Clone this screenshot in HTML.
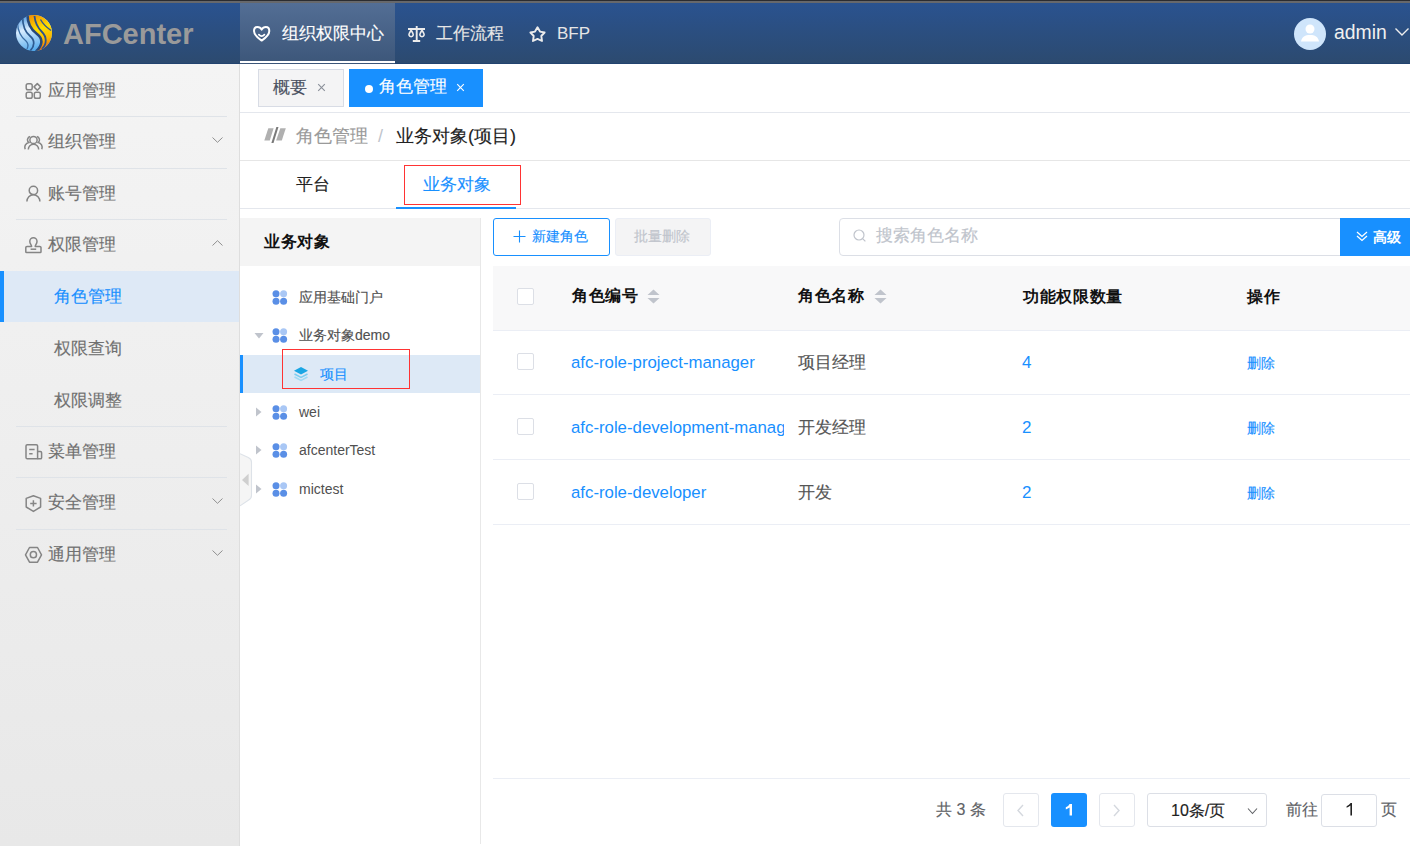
<!DOCTYPE html>
<html><head><meta charset="utf-8">
<style>
*{box-sizing:border-box;margin:0;padding:0}
html,body{width:1410px;height:846px;overflow:hidden;background:#fff;font-family:"Liberation Sans",sans-serif;}
.a{position:absolute;white-space:nowrap}
#hdr{position:absolute;left:0;top:0;width:1410px;height:64px;background:linear-gradient(#2a5391,#2c4a6f);}
#hdr .top1{position:absolute;left:0;top:0;width:1410px;height:1px;background:#2b2c30}
#hdr .top2{position:absolute;left:0;top:1px;width:1410px;height:2px;background:#67686b}
#side{position:absolute;left:0;top:64px;width:240px;height:782px;background:linear-gradient(#f4f4f4,#e8e8e8);border-right:1px solid #dedede}
.mi{position:absolute;left:0;width:239px;height:52px;color:#777;font-size:17px}
.div{position:absolute;left:16px;width:211px;height:1px;background:#dfe3e8}
.ico{position:absolute}
.chev{position:absolute;left:212px;width:11px;height:6px}
</style></head><body>

<div id="hdr">
  <div class="top1"></div><div class="top2"></div><div style="position:absolute;left:0;top:63px;width:1410px;height:1px;background:#22436f"></div>
  <!-- logo -->
  <svg class="a" style="left:15px;top:14px" width="38" height="38" viewBox="0 0 38 38">
    <defs>
      <clipPath id="gc"><circle cx="19" cy="19" r="18"/></clipPath>
      <linearGradient id="gb" x1="0.2" y1="0" x2="0.5" y2="1"><stop offset="0" stop-color="#3d8fdc"/><stop offset="0.4" stop-color="#d8ecff"/><stop offset="0.65" stop-color="#9fd0f6"/><stop offset="1" stop-color="#4aa6ec"/></linearGradient>
      <linearGradient id="gy" x1="0.3" y1="0" x2="0.6" y2="1"><stop offset="0" stop-color="#f39200"/><stop offset="0.4" stop-color="#ffdf00"/><stop offset="0.7" stop-color="#fbb800"/><stop offset="1" stop-color="#e24f10"/></linearGradient>
    </defs>
    <g clip-path="url(#gc)">
      <rect x="0" y="0" width="38" height="38" fill="url(#gb)"/>
      <path d="M12.5 0 C12.5 9, 15 15, 22 20 C28 24.5, 28 31, 21 38 L40 38 L40 0 Z" fill="url(#gy)"/>
      <path d="M12.5 1 C12.5 9, 15 15, 22 20 C28 24.5, 28 31, 21 37.5" stroke="#28497a" stroke-width="2.6" fill="none"/>
      <path d="M7.6 2.5 C7.6 10, 10 18, 15 22 C20 26, 20 32, 15 37" stroke="#2d5a90" stroke-width="1.7" fill="none"/>
      <path d="M2.5 9 C2.8 17, 6 23, 11 27 C13 29, 13.5 32, 12 35" stroke="#3a6ea6" stroke-width="1.3" fill="none"/>
      <path d="M19.5 2 C20 8, 22 13, 27 18 C32 23, 32 30, 27 35" stroke="#2c528a" stroke-width="1.8" fill="none"/>
      <path d="M25.5 5.5 C28 10, 31 13, 36 16.5" stroke="#34598c" stroke-width="1.4" fill="none"/>
    </g>
  </svg>
  <div class="a" style="left:63px;top:17px;font-size:29px;font-weight:bold;color:#9a9a9a;line-height:34px">AFCenter</div>

  <!-- nav active -->
  <div class="a" style="left:240px;top:3px;width:155px;height:61px;background:linear-gradient(#536e95,#3c5679)"></div>
  <div class="a" style="left:240px;top:61px;width:155px;height:2px;background:#fff"></div>
  <svg class="a" style="left:252px;top:25px" width="19" height="18" viewBox="0 0 19 18">
    <path d="M9.65 4.6 C8.7 2.8 7 2 5.4 2 C3.3 2 2 3.8 2 6 C2 9.2 5.2 12.6 9.65 15.6 C14.1 12.6 17.3 9.2 17.3 6 C17.3 3.8 16 2 13.9 2 C12.3 2 10.6 2.8 9.65 4.6 Z" fill="none" stroke="#fff" stroke-width="2" stroke-linejoin="round"/>
    <path d="M6.9 9.7 Q9.65 12.6 12.4 9.7" fill="none" stroke="#fff" stroke-width="1.8" stroke-linecap="round"/>
  </svg>
  <div class="a" style="left:282px;top:24px;font-size:17px;color:#fff;line-height:20px;-webkit-text-stroke:0.15px currentColor">组织权限中心</div>

  <svg class="a" style="left:404px;top:22px" width="26" height="24" viewBox="0 0 26 24">
    <path d="M4 7 H21 M12.7 4.1 V19.3 M8.8 19 H16.2" stroke="#ececec" stroke-width="1.9" fill="none"/>
    <path d="M7.1 8.2 C6.1 10 4.9 11.5 4.9 12.9 A2.25 2.25 0 0 0 9.3 12.9 C9.3 11.5 8.1 10 7.1 8.2 Z M18 8.2 C17 10 15.8 11.5 15.8 12.9 A2.25 2.25 0 0 0 20.2 12.9 C20.2 11.5 19 10 18 8.2 Z" stroke="#ececec" stroke-width="1.6" fill="none" stroke-linejoin="round"/>
  </svg>
  <div class="a" style="left:436px;top:24px;font-size:17px;color:#e6e6e6;line-height:20px;-webkit-text-stroke:0.15px currentColor">工作流程</div>

  <svg class="a" style="left:524px;top:22px" width="26" height="24" viewBox="0 0 26 24">
    <path d="M13.5 5.3 L16 9.6 L20.6 10.5 L17.3 14 L18 19 L13.5 16.9 L9 19 L9.7 14 L6.4 10.5 L11 9.6 Z" fill="none" stroke="#ececec" stroke-width="1.9" stroke-linejoin="round"/>
  </svg>
  <div class="a" style="left:557px;top:24px;font-size:17px;color:#e6e6e6;line-height:20px">BFP</div>

  <!-- user -->
  <svg class="a" style="left:1294px;top:18px" width="32" height="32" viewBox="0 0 32 32">
    <circle cx="16" cy="16" r="16" fill="#cfe5fb"/>
    <circle cx="16" cy="11" r="4.5" fill="#fff"/>
    <path d="M7 23.5 C8 18.5 11 17 16 17 C21 17 24 18.5 25 23.5 Z" fill="#fff"/>
  </svg>
  <div class="a" style="left:1334px;top:21px;font-size:19.4px;color:#f0f0f0;line-height:23px">admin</div>
  <svg class="a" style="left:1394px;top:27px" width="16" height="10" viewBox="0 0 16 10"><path d="M1.5 1.5 L8 8 L14.5 1.5" stroke="#eee" stroke-width="1.4" fill="none"/></svg>
</div>

<div id="side">
</div>
<div class="div" style="top:116px"></div>
<div class="div" style="top:168px"></div>
<div class="div" style="top:219px"></div>
<div class="div" style="top:426px"></div>
<div class="div" style="top:477px"></div>
<div class="div" style="top:529px"></div>
<div class="a" style="left:0;top:271px;width:239px;height:51px;background:#dee9f6"></div>
<div class="a" style="left:0;top:271px;width:4px;height:51px;background:#1890ff"></div>

<svg class="a" style="left:24px;top:82px" width="18" height="18" viewBox="0 0 18 18" fill="none" stroke="#858585" stroke-width="1.5">
  <rect x="2.2" y="1.8" width="6" height="6" rx="1.8"/>
  <rect x="2.2" y="10.3" width="6" height="6" rx="1.8"/>
  <rect x="10.3" y="10.3" width="6" height="6" rx="1.8"/>
  <path d="M13.3 1.6 L16.6 4.9 L13.3 8.2 L10 4.9 Z" stroke-linejoin="round"/>
</svg>
<div class="a" style="left:48px;top:81px;font-size:17px;line-height:20px;color:#707070;-webkit-text-stroke:0.15px currentColor">应用管理</div>

<svg class="a" style="left:24px;top:134px" width="20" height="17" viewBox="0 0 20 17" fill="none" stroke="#858585" stroke-width="1.5">
  <circle cx="9.5" cy="6" r="3.6"/>
  <path d="M4.3 15.6 A5.2 5.4 0 0 1 14.7 15.6"/>
  <path d="M6.2 2.6 A3.4 3.4 0 0 0 4.8 8.6 A4.6 4.8 0 0 0 1.2 15.2"/>
  <path d="M12.8 2.6 A3.4 3.4 0 0 1 14.2 8.6 A4.6 4.8 0 0 1 17.8 15.2"/>
</svg>
<div class="a" style="left:48px;top:132px;font-size:17px;line-height:20px;color:#707070;-webkit-text-stroke:0.15px currentColor">组织管理</div>
<svg class="chev" style="top:137px" viewBox="0 0 11 6"><path d="M0.5 0.5 L5.5 5.3 L10.5 0.5" stroke="#8f8f8f" stroke-width="1" fill="none"/></svg>

<svg class="a" style="left:24px;top:184px" width="18" height="19" viewBox="0 0 18 19" fill="none" stroke="#858585" stroke-width="1.5">
  <circle cx="9.4" cy="6.4" r="4.2"/>
  <path d="M2.9 17.6 A6.5 6.8 0 0 1 15.9 17.6"/>
</svg>
<div class="a" style="left:48px;top:184px;font-size:17px;line-height:20px;color:#707070;-webkit-text-stroke:0.15px currentColor">账号管理</div>

<svg class="a" style="left:24px;top:235px" width="18" height="19" viewBox="0 0 18 19" fill="none" stroke="#858585" stroke-width="1.5">
  <path d="M7.6 11.4 C7.6 10 5.8 9 5.8 6.4 A3.6 3.6 0 0 1 13 6.4 C13 9 11.2 10 11.2 11.4 H15.8 Q17 11.4 17 12.6 V16.8 Q17 17.6 16.2 17.6 H2.6 Q1.8 17.6 1.8 16.8 V12.6 Q1.8 11.4 3 11.4 Z" stroke-linejoin="round"/>
  <path d="M6.6 14.2 H12.2"/>
</svg>
<div class="a" style="left:48px;top:235px;font-size:17px;line-height:20px;color:#707070;-webkit-text-stroke:0.15px currentColor">权限管理</div>
<svg class="chev" style="top:240px" viewBox="0 0 11 6"><path d="M0.5 5.5 L5.5 0.7 L10.5 5.5" stroke="#8f8f8f" stroke-width="1" fill="none"/></svg>

<div class="a" style="left:54px;top:287px;font-size:17px;line-height:20px;color:#1890ff;-webkit-text-stroke:0.15px currentColor">角色管理</div>
<div class="a" style="left:54px;top:339px;font-size:17px;line-height:20px;color:#707070;-webkit-text-stroke:0.15px currentColor">权限查询</div>
<div class="a" style="left:54px;top:391px;font-size:17px;line-height:20px;color:#707070;-webkit-text-stroke:0.15px currentColor">权限调整</div>

<svg class="a" style="left:24px;top:443px" width="19" height="18" viewBox="0 0 19 18" fill="none" stroke="#858585" stroke-width="1.5">
  <path d="M13.6 15.85 H3.3 Q2 15.85 2 14.55 V3.05 Q2 1.75 3.3 1.75 H12.3 Q13.6 1.75 13.6 3.05 Z" stroke-linejoin="round"/>
  <path d="M13.6 8.6 H16.4 Q17.6 8.6 17.6 9.8 V14.65 Q17.6 15.85 16.4 15.85 H13.6"/>
  <path d="M5.2 6.6 H10.6 M5.2 10.8 H8.6"/>
</svg>
<div class="a" style="left:48px;top:442px;font-size:17px;line-height:20px;color:#707070;-webkit-text-stroke:0.15px currentColor">菜单管理</div>

<svg class="a" style="left:24px;top:494px" width="19" height="19" viewBox="0 0 19 19" fill="none" stroke="#858585" stroke-width="1.5">
  <path d="M9.4 1.8 L16.6 4.4 V13 L9.4 17.4 L2.2 13 V4.4 Z" stroke-linejoin="round"/>
  <path d="M9.4 6.2 V12.6 M6.2 9.4 H12.6"/>
</svg>
<div class="a" style="left:48px;top:493px;font-size:17px;line-height:20px;color:#707070;-webkit-text-stroke:0.15px currentColor">安全管理</div>
<svg class="chev" style="top:498px" viewBox="0 0 11 6"><path d="M0.5 0.5 L5.5 5.3 L10.5 0.5" stroke="#8f8f8f" stroke-width="1" fill="none"/></svg>

<svg class="a" style="left:24px;top:546px" width="19" height="18" viewBox="0 0 19 18" fill="none" stroke="#858585" stroke-width="1.5">
  <path d="M5.5 1.5 H13.5 L17.5 8.8 L13.5 16.2 H5.5 L1.5 8.8 Z" stroke-linejoin="round"/>
  <circle cx="9.4" cy="8.7" r="3.1"/>
</svg>
<div class="a" style="left:48px;top:545px;font-size:17px;line-height:20px;color:#707070;-webkit-text-stroke:0.15px currentColor">通用管理</div>
<svg class="chev" style="top:550px" viewBox="0 0 11 6"><path d="M0.5 0.5 L5.5 5.3 L10.5 0.5" stroke="#8f8f8f" stroke-width="1" fill="none"/></svg>


<!-- tabs bar -->
<div class="a" style="left:258px;top:69px;width:86px;height:38px;background:#f4f4f5;border:1px solid #d8dce5"></div>
<div class="a" style="left:273px;top:78px;font-size:17px;line-height:20px;color:#495060;-webkit-text-stroke:0.15px currentColor">概要</div>
<svg class="a" style="left:317px;top:83px" width="9" height="9" viewBox="0 0 9 9"><path d="M1.2 1.2 L7.8 7.8 M7.8 1.2 L1.2 7.8" stroke="#8a8f99" stroke-width="1.1"/></svg>
<div class="a" style="left:349px;top:69px;width:134px;height:38px;background:#1890ff"></div>
<div class="a" style="left:364.5px;top:85px;width:8px;height:8px;border-radius:50%;background:#fff"></div>
<div class="a" style="left:379px;top:77px;font-size:17px;line-height:20px;color:#fff;-webkit-text-stroke:0.15px currentColor">角色管理</div>
<svg class="a" style="left:456px;top:83px" width="9" height="9" viewBox="0 0 9 9"><path d="M1.2 1.2 L7.8 7.8 M7.8 1.2 L1.2 7.8" stroke="#fff" stroke-width="1.1"/></svg>
<div class="a" style="left:240px;top:112px;width:1170px;height:1px;background:#e4e7ed"></div>

<!-- breadcrumb -->
<svg class="a" style="left:260px;top:122px" width="30" height="26" viewBox="0 0 30 26">
  <path d="M8.3 6.2 H13.6 L9.8 18.6 H4.3 Z" fill="#b0b0b0"/><path d="M16.4 4.9 H18.5 L13.5 20.9 H11.4 Z" fill="#7a7a7a"/><path d="M20.3 6.2 H25.8 L21.8 18.6 H16.1 Z" fill="#b0b0b0"/>
</svg>
<div class="a" style="left:296px;top:125px;font-size:18px;line-height:22px;color:#9a9a9a;-webkit-text-stroke:0.15px currentColor">角色管理</div>
<div class="a" style="left:378px;top:125px;font-size:18px;line-height:22px;color:#c0c4cc">/</div>
<div class="a" style="left:396px;top:125px;font-size:18px;line-height:22px;color:#222;-webkit-text-stroke:0.15px currentColor">业务对象(项目)</div>
<div class="a" style="left:240px;top:160px;width:1170px;height:1px;background:#e6e6e6"></div>

<!-- sub tabs -->
<div class="a" style="left:296px;top:175px;font-size:17px;line-height:20px;color:#222;-webkit-text-stroke:0.15px currentColor">平台</div>
<div class="a" style="left:423px;top:175px;font-size:17px;line-height:20px;color:#1890ff;-webkit-text-stroke:0.15px currentColor">业务对象</div>
<div class="a" style="left:404px;top:165px;width:117px;height:40px;border:1px solid #ff3333"></div>
<div class="a" style="left:240px;top:208px;width:1170px;height:1px;background:#e4e7ed"></div>
<div class="a" style="left:396px;top:207px;width:120px;height:2px;background:#1890ff"></div>

<!-- tree -->
<div class="a" style="left:240px;top:218px;width:240px;height:48px;background:#f4f4f4"></div>
<div class="a" style="left:480px;top:218px;width:1px;height:626px;background:#e8e8e8"></div>
<div class="a" style="left:264px;top:232px;font-size:16px;letter-spacing:0.7px;line-height:20px;font-weight:bold;color:#111">业务对象</div>
<svg class="a" style="left:272px;top:290px" width="16" height="15" viewBox="0 0 16 15"><circle cx="4" cy="3.8" r="3.5" fill="#5a8fe6"/><circle cx="11.6" cy="3.8" r="3.5" fill="#a9c7f5"/><circle cx="4" cy="11.2" r="3.5" fill="#5a8fe6"/><circle cx="11.6" cy="11.2" r="3.5" fill="#5a8fe6"/></svg><div class="a" style="left:299px;top:288px;font-size:14px;line-height:18px;color:#505050;-webkit-text-stroke:0.15px currentColor">应用基础门户</div>
<svg class="a" style="left:272px;top:328px" width="16" height="15" viewBox="0 0 16 15"><circle cx="4" cy="3.8" r="3.5" fill="#5a8fe6"/><circle cx="11.6" cy="3.8" r="3.5" fill="#a9c7f5"/><circle cx="4" cy="11.2" r="3.5" fill="#5a8fe6"/><circle cx="11.6" cy="11.2" r="3.5" fill="#5a8fe6"/></svg><svg class="a" style="left:254px;top:332px" width="10" height="7" viewBox="0 0 10 7"><path d="M0.5 1 L9.5 1 L5 6.5 Z" fill="#c0c4cc"/></svg><div class="a" style="left:299px;top:326px;font-size:14px;line-height:18px;color:#505050;-webkit-text-stroke:0.15px currentColor">业务对象demo</div>
<svg class="a" style="left:272px;top:405px" width="16" height="15" viewBox="0 0 16 15"><circle cx="4" cy="3.8" r="3.5" fill="#5a8fe6"/><circle cx="11.6" cy="3.8" r="3.5" fill="#a9c7f5"/><circle cx="4" cy="11.2" r="3.5" fill="#5a8fe6"/><circle cx="11.6" cy="11.2" r="3.5" fill="#5a8fe6"/></svg><svg class="a" style="left:255px;top:407px" width="7" height="10" viewBox="0 0 7 10"><path d="M1 0.5 L6.5 5 L1 9.5 Z" fill="#c0c4cc"/></svg><div class="a" style="left:299px;top:403px;font-size:14px;line-height:18px;color:#505050">wei</div>
<svg class="a" style="left:272px;top:443px" width="16" height="15" viewBox="0 0 16 15"><circle cx="4" cy="3.8" r="3.5" fill="#5a8fe6"/><circle cx="11.6" cy="3.8" r="3.5" fill="#a9c7f5"/><circle cx="4" cy="11.2" r="3.5" fill="#5a8fe6"/><circle cx="11.6" cy="11.2" r="3.5" fill="#5a8fe6"/></svg><svg class="a" style="left:255px;top:445px" width="7" height="10" viewBox="0 0 7 10"><path d="M1 0.5 L6.5 5 L1 9.5 Z" fill="#c0c4cc"/></svg><div class="a" style="left:299px;top:441px;font-size:14px;line-height:18px;color:#505050">afcenterTest</div>
<svg class="a" style="left:272px;top:482px" width="16" height="15" viewBox="0 0 16 15"><circle cx="4" cy="3.8" r="3.5" fill="#5a8fe6"/><circle cx="11.6" cy="3.8" r="3.5" fill="#a9c7f5"/><circle cx="4" cy="11.2" r="3.5" fill="#5a8fe6"/><circle cx="11.6" cy="11.2" r="3.5" fill="#5a8fe6"/></svg><svg class="a" style="left:255px;top:484px" width="7" height="10" viewBox="0 0 7 10"><path d="M1 0.5 L6.5 5 L1 9.5 Z" fill="#c0c4cc"/></svg><div class="a" style="left:299px;top:480px;font-size:14px;line-height:18px;color:#505050">mictest</div>
<div class="a" style="left:240px;top:355px;width:240px;height:38px;background:#dde9f6"></div>
<div class="a" style="left:240px;top:355px;width:3px;height:38px;background:#1890ff"></div>
<svg class="a" style="left:293px;top:366px" width="16" height="16" viewBox="0 0 16 16">
  <path d="M8 1 L15 4.8 L8 8.6 L1 4.8 Z" fill="#1aa6e4"/>
  <path d="M1.5 8 L8 11.5 L14.5 8" fill="none" stroke="#7ccdf0" stroke-width="1.5"/>
  <path d="M1.5 11 L8 14.5 L14.5 11" fill="none" stroke="#9fdaf4" stroke-width="1.5"/>
</svg>
<div class="a" style="left:320px;top:365px;font-size:14px;line-height:18px;color:#1890ff;-webkit-text-stroke:0.15px currentColor">项目</div>
<div class="a" style="left:282px;top:349px;width:128px;height:40px;border:1px solid #ff3333"></div>
<svg class="a" style="left:240px;top:452px" width="13" height="56" viewBox="0 0 13 56"><path d="M0 1.7 L8.3 5.6 Q11.5 7.1 11.5 10.3 V43.5 Q11.5 46.7 8.3 48.2 L0 53.8" fill="#f5f5f5" stroke="#dde2e8" stroke-width="1.1"/><path d="M8.6 21.7 V34.1 L2 27.9 Z" fill="#cfcfcf"/></svg>

<!-- toolbar -->
<div class="a" style="left:493px;top:218px;width:117px;height:38px;border:1px solid #1890ff;border-radius:3px;background:#fff"></div>
<svg class="a" style="left:513px;top:230px" width="13" height="13" viewBox="0 0 13 13"><path d="M6.5 0.5 V12.5 M0.5 6.5 H12.5" stroke="#1890ff" stroke-width="1.1"/></svg>
<div class="a" style="left:532px;top:228px;font-size:14px;line-height:17px;color:#1890ff;-webkit-text-stroke:0.15px currentColor">新建角色</div>
<div class="a" style="left:615px;top:218px;width:96px;height:38px;border:1px solid #ebeef5;border-radius:3px;background:#f4f4f5"></div>
<div class="a" style="left:634px;top:228px;font-size:14px;line-height:17px;color:#c0c4cc;-webkit-text-stroke:0.15px currentColor">批量删除</div>
<div class="a" style="left:839px;top:218px;width:510px;height:38px;border:1px solid #dcdfe6;border-radius:4px;background:#fff"></div>
<svg class="a" style="left:853px;top:229px" width="14" height="14" viewBox="0 0 14 14"><circle cx="6" cy="6" r="5" fill="none" stroke="#c0c4cc" stroke-width="1.2"/><path d="M9.6 9.6 L12.4 12.4" stroke="#c0c4cc" stroke-width="1.2"/></svg>
<div class="a" style="left:876px;top:226px;font-size:17px;line-height:20px;color:#c0c4cc;-webkit-text-stroke:0.15px currentColor">搜索角色名称</div>
<div class="a" style="left:1340px;top:218px;width:70px;height:38px;background:#1890ff"></div>
<svg class="a" style="left:1356px;top:231px" width="12" height="11" viewBox="0 0 12 11"><path d="M1 1 L6 5.5 L11 1 M1 5 L6 9.5 L11 5" stroke="#fff" stroke-width="1.3" fill="none"/></svg>
<div class="a" style="left:1373px;top:228px;font-size:14px;line-height:18px;color:#fff;font-weight:bold;letter-spacing:0.4px">高级</div>

<!-- table -->
<div class="a" style="left:493px;top:266px;width:917px;height:64px;background:#f8f8f9"></div>
<div class="a" style="left:493px;top:330px;width:917px;height:1px;background:#ebeef5"></div>
<div class="a" style="left:493px;top:394px;width:917px;height:1px;background:#ebeef5"></div>
<div class="a" style="left:493px;top:459px;width:917px;height:1px;background:#ebeef5"></div>
<div class="a" style="left:493px;top:524px;width:917px;height:1px;background:#ebeef5"></div>
<div class="a" style="left:517px;top:288px;width:17px;height:17px;border:1px solid #dcdfe6;border-radius:2px;background:#fff"></div>
<div class="a" style="left:572px;top:286px;font-size:16px;letter-spacing:0.7px;line-height:20px;font-weight:bold;color:#111">角色编号</div>
<svg class="a" style="left:646.5px;top:289px" width="13" height="15" viewBox="0 0 13 15"><path d="M6.5 0.5 L12.5 6 H0.5 Z M0.5 9 H12.5 L6.5 14.5 Z" fill="#c0c4cc"/></svg>
<div class="a" style="left:798px;top:286px;font-size:16px;letter-spacing:0.7px;line-height:20px;font-weight:bold;color:#111">角色名称</div>
<svg class="a" style="left:873.5px;top:289px" width="13" height="15" viewBox="0 0 13 15"><path d="M6.5 0.5 L12.5 6 H0.5 Z M0.5 9 H12.5 L6.5 14.5 Z" fill="#c0c4cc"/></svg>
<div class="a" style="left:1023px;top:287px;font-size:16px;letter-spacing:0.7px;line-height:20px;font-weight:bold;color:#111">功能权限数量</div>
<div class="a" style="left:1247px;top:287px;font-size:16px;letter-spacing:0.7px;line-height:20px;font-weight:bold;color:#111">操作</div>
<div class="a" style="left:517px;top:353px;width:17px;height:17px;border:1px solid #dcdfe6;border-radius:2px;background:#fff"></div><div class="a" style="left:571px;top:353px;width:213px;overflow:hidden;font-size:16.8px;line-height:20px;color:#1890ff">afc-role-project-manager</div>
<div class="a" style="left:798px;top:353px;font-size:17px;line-height:20px;color:#555;-webkit-text-stroke:0.15px currentColor">项目经理</div>
<div class="a" style="left:1022px;top:353px;font-size:17px;line-height:20px;color:#1890ff">4</div>
<div class="a" style="left:1247px;top:354.5px;font-size:14px;line-height:17px;color:#1890ff;-webkit-text-stroke:0.15px currentColor">删除</div>
<div class="a" style="left:517px;top:418px;width:17px;height:17px;border:1px solid #dcdfe6;border-radius:2px;background:#fff"></div><div class="a" style="left:571px;top:418px;width:213px;overflow:hidden;font-size:16.8px;line-height:20px;color:#1890ff">afc-role-development-manager</div>
<div class="a" style="left:798px;top:418px;font-size:17px;line-height:20px;color:#555;-webkit-text-stroke:0.15px currentColor">开发经理</div>
<div class="a" style="left:1022px;top:418px;font-size:17px;line-height:20px;color:#1890ff">2</div>
<div class="a" style="left:1247px;top:419.5px;font-size:14px;line-height:17px;color:#1890ff;-webkit-text-stroke:0.15px currentColor">删除</div>
<div class="a" style="left:517px;top:483px;width:17px;height:17px;border:1px solid #dcdfe6;border-radius:2px;background:#fff"></div><div class="a" style="left:571px;top:483px;width:213px;overflow:hidden;font-size:16.8px;line-height:20px;color:#1890ff">afc-role-developer</div>
<div class="a" style="left:798px;top:483px;font-size:17px;line-height:20px;color:#555;-webkit-text-stroke:0.15px currentColor">开发</div>
<div class="a" style="left:1022px;top:483px;font-size:17px;line-height:20px;color:#1890ff">2</div>
<div class="a" style="left:1247px;top:484.5px;font-size:14px;line-height:17px;color:#1890ff;-webkit-text-stroke:0.15px currentColor">删除</div>

<div class="a" style="left:493px;top:778px;width:917px;height:1px;background:#ebeef5"></div>
<!-- pagination -->
<div class="a" style="left:936px;top:800px;font-size:16px;line-height:19px;color:#606266;-webkit-text-stroke:0.15px currentColor">共 3 条</div>
<div class="a" style="left:1003px;top:793px;width:36px;height:34px;border:1px solid #e4e7ed;border-radius:3px;background:#fff"></div>
<svg class="a" style="left:1016px;top:804px" width="9" height="13" viewBox="0 0 9 13"><path d="M7 1 L2 6.5 L7 12" stroke="#d4d8de" stroke-width="1.4" fill="none"/></svg>
<div class="a" style="left:1051px;top:793px;width:36px;height:34px;border-radius:3px;background:#1890ff"></div>
<svg class="a" style="left:1065px;top:804px" width="8" height="12" viewBox="0 0 8 12"><path d="M4.6 0 H7 V11.6 H4.6 V3.6 Q3 4.9 0.8 5.4 V3.2 Q3.6 2.2 4.6 0 Z" fill="#fff"/></svg>
<div class="a" style="left:1099px;top:793px;width:36px;height:34px;border:1px solid #e4e7ed;border-radius:3px;background:#fff"></div>
<svg class="a" style="left:1112px;top:804px" width="9" height="13" viewBox="0 0 9 13"><path d="M2 1 L7 6.5 L2 12" stroke="#d4d8de" stroke-width="1.4" fill="none"/></svg>
<div class="a" style="left:1147px;top:793px;width:120px;height:34px;border:1px solid #dcdfe6;border-radius:3px;background:#fff"></div>
<div class="a" style="left:1171px;top:801px;font-size:16px;line-height:19px;color:#222;-webkit-text-stroke:0.15px currentColor">10条/页</div>
<svg class="a" style="left:1247px;top:807px" width="11" height="8" viewBox="0 0 11 8"><path d="M1 1.5 L5.5 6.5 L10 1.5" stroke="#606266" stroke-width="1.1" fill="none"/></svg>
<div class="a" style="left:1286px;top:800px;font-size:16px;line-height:19px;color:#606266;-webkit-text-stroke:0.15px currentColor">前往</div>
<div class="a" style="left:1321px;top:794px;width:56px;height:33px;border:1px solid #dcdfe6;border-radius:3px;background:#fff"></div>
<svg class="a" style="left:1346px;top:803px" width="7" height="13" viewBox="0 0 7 13"><path d="M4.6 0 H6 V12.6 H4.4 V2.6 Q2.8 4 0.6 4.7 V3.2 Q3.4 2 4.6 0 Z" fill="#222"/></svg>
<div class="a" style="left:1381px;top:800px;font-size:16px;line-height:19px;color:#606266;-webkit-text-stroke:0.15px currentColor">页</div>
</body></html>
